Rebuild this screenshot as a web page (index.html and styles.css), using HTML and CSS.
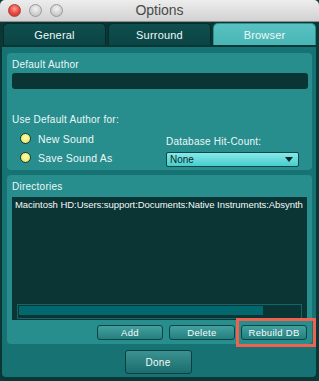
FILE: index.html
```html
<!DOCTYPE html>
<html lang="en">
<head>
    <meta charset="UTF-8">
    <meta name="viewport" content="width=device-width, initial-scale=1.0">
    <title>Options</title>
    <link rel="stylesheet" href="styles.css">
</head>
<body>
    <div class="window">
        <!-- Title bar -->
        <div class="titlebar">
            <div class="lights">
                <span class="light close"></span>
                <span class="light"></span>
                <span class="light"></span>
            </div>
            <div class="title">Options</div>
            <div></div>
        </div>

        <div class="frame">
            <!-- Tabs -->
            <div class="tabs">
                <div class="tab">General</div>
                <div class="tab">Surround</div>
                <div class="tab active">Browser</div>
            </div>

            <div class="panel">
                <section class="group author">
                    <div class="label">Default Author</div>
                    <div class="field"></div>

                    <div class="options-row">
                        <div class="use-for">
                            <div class="label">Use Default Author for:</div>
                            <div class="radio"><span class="dot"></span>New Sound</div>
                            <div class="radio"><span class="dot"></span>Save Sound As</div>
                        </div>
                        <div class="hitcount">
                            <div class="label">Database Hit-Count:</div>
                            <div class="select">
                                <span>None</span>
                                <svg width="8" height="5" viewBox="0 0 8 5"><path d="M0 0h8L4 5z" fill="#0a2626"/></svg>
                            </div>
                        </div>
                    </div>
                </section>

                <section class="group dirs">
                    <div class="label">Directories</div>
                    <div class="list">
                        <div class="entry">Macintosh HD:Users:support:Documents:Native Instruments:Absynth</div>
                        <div class="hscroll">
                            <div class="thumb" style="width: 87%"></div>
                        </div>
                    </div>
                    <div class="actions">
                        <button class="btn">Add</button>
                        <button class="btn">Delete</button>
                        <button class="btn highlighted">Rebuild DB</button>
                    </div>
                </section>

                <div class="footer">
                    <button class="btn done">Done</button>
                </div>
            </div>
        </div>
    </div>
</body>
</html>
```

FILE: styles.css
```css
body {
    margin: 0;
    padding: 0;
    background-color: #0c3a3a;
    font-family: 'Liberation Sans', Arial, sans-serif;
    width: 319px;
    height: 381px;
    overflow: hidden;
}

.window {
    width: 319px;
    height: 381px;
    display: flex;
    flex-direction: column;
}

/* Title bar */
.titlebar {
    height: 21px;
    border-bottom: 1px solid #8e8e8e;
    border-radius: 5px 5px 0 0;
    background: linear-gradient(#ededed, #d2d2d2);
    display: grid;
    grid-template-columns: 1fr auto 1fr;
    align-items: center;
}

.lights {
    display: flex;
    gap: 8px;
    padding-left: 8px;
}

.light {
    width: 11px;
    height: 11px;
    border-radius: 50%;
    border: 0.5px solid #9a9a9a;
    background: radial-gradient(circle at 50% 35%, #f4f4f4, #cfcfcf 60%, #b8b8b8);
}

.light.close {
    border-color: #b0403a;
    background: radial-gradient(circle at 50% 35%, #ff9d94, #e5463f 55%, #c2302b);
}

.title {
    font-size: 14px;
    color: #4a4a4a;
    line-height: 21px;
}

/* Window frame */
.frame {
    flex-grow: 1;
    background-color: #0a3636;
    padding: 1px 3px 4px 2px;
    border-radius: 0 0 5px 5px;
    display: flex;
    flex-direction: column;
}

.tabs {
    display: flex;
    gap: 2px;
    padding-left: 1px;
    height: 22px;
}

.tab {
    flex: 1;
    border: 1px solid #062c2c;
    border-bottom: none;
    border-radius: 5px 5px 0 0;
    background: linear-gradient(#0f4f4f, #0b4444);
    color: #eef9f9;
    font-size: 11px;
    letter-spacing: 0.2px;
    text-align: center;
    line-height: 22px;
}

.tab.active {
    background: linear-gradient(#58c2c2, #4ab5b5);
    border-color: #2f8e8e;
}

.panel {
    margin-top: 2px;
    background-color: #177373;
    padding: 6px 4px 3px 5px;
    border-radius: 0 0 4px 4px;
}

/* Group boxes */
.group {
    background-color: #278d8d;
    border-radius: 4px;
    padding: 6px 5px 3px 5px;
}

.label {
    color: #ecf8f8;
    font-size: 10px;
    letter-spacing: 0.25px;
    line-height: 12px;
}

.field {
    margin-top: 2px;
    height: 16px;
    background-color: #0b3434;
    border-radius: 3px;
    margin-right: -1px;
}

.options-row {
    margin-top: 25px;
    display: flex;
    justify-content: space-between;
    align-items: flex-end;
}

.use-for .label {
    margin-bottom: 3px;
}

.radio {
    display: flex;
    align-items: center;
    height: 19px;
    padding-left: 8px;
    color: #ecf8f8;
    font-size: 10.5px;
    letter-spacing: 0.2px;
}

.dot {
    width: 9px;
    height: 9px;
    margin-right: 7px;
    border-radius: 50%;
    border: 1px solid #1f3d2e;
    background: radial-gradient(circle at 50% 40%, #ffffb0, #f0ec7c 60%, #cfc75a);
}

.hitcount {
    width: 133px;
    margin-right: 8px;
}

.hitcount .label {
    margin-bottom: 4px;
}

.select {
    height: 13px;
    border: 1px solid #0c4848;
    border-radius: 2px;
    background: linear-gradient(#86e9e9, #48cdcd);
    display: flex;
    align-items: center;
    justify-content: space-between;
    padding: 0 5px 0 3px;
    font-size: 10px;
    color: #0a2626;
}

.dirs {
    margin-top: 5px;
    padding-bottom: 4px;
}

.list {
    margin-top: 4px;
    height: 120px;
    background-color: #0b3434;
    padding: 2px 0 1px 0;
    display: flex;
    flex-direction: column;
}

.entry {
    flex-grow: 1;
    padding-left: 3px;
    color: #f2fafa;
    font-size: 9.5px;
    letter-spacing: -0.05px;
    line-height: 12px;
    white-space: nowrap;
}

.hscroll {
    height: 11px;
    margin: 0 5px;
    border: 1px solid #13676b;
    padding: 1px;
}

.thumb {
    height: 9px;
    background-color: #03686e;
}

.actions {
    margin-top: 5px;
    display: flex;
    justify-content: flex-end;
    gap: 6px;
}

.btn {
    width: 66px;
    height: 15px;
    padding: 0;
    border: 1px solid #0c4444;
    border-radius: 3px;
    background: linear-gradient(#45a0a0, #247f7f);
    color: #f4fcfc;
    font-family: 'Liberation Sans', Arial, sans-serif;
    font-size: 9.5px;
    letter-spacing: 0.3px;
}

.highlighted {
    position: relative;
}

/* annotation box around Rebuild DB */
.highlighted:after {
    content: "";
    position: absolute;
    top: -8px;
    left: -6px;
    right: -10px;
    bottom: -8px;
    border: 3px solid #f0614f;
}

.footer {
    display: flex;
    justify-content: center;
    padding-top: 6px;
    padding-right: 3px;
}

.btn.done {
    width: 67px;
    height: 24px;
    background: linear-gradient(#3c9191, #1a6d6d);
    border-color: #0a3f3f;
    font-size: 10px;
}
```
